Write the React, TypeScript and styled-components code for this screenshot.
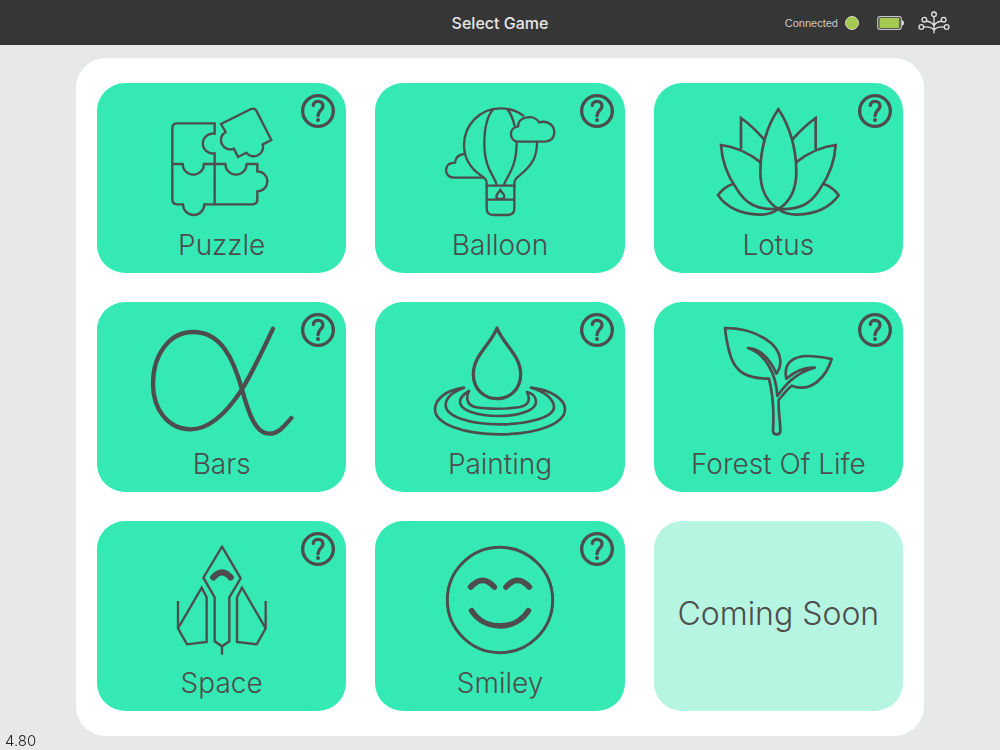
import React from "react";
import styled, { createGlobalStyle } from "styled-components";

const GlobalStyle = createGlobalStyle`
  *, *::before, *::after { box-sizing: border-box; }
  body {
    margin: 0;
    background: #e7e9e8;
    color: #4d4d4d;
    font-family: Inter, "Liberation Sans", sans-serif;
  }
  button { font: inherit; color: inherit; border: 0; padding: 0; cursor: pointer; }
`;

const Page = styled.div`
  min-height: 100vh;
  display: flex;
  flex-direction: column;
`;

const Header = styled.header`
  height: 45px;
  display: grid;
  grid-template-columns: 1fr auto 1fr;
  align-items: center;
  padding: 0 50px;
  background: #363636;
  color: #e6e6e6;
`;

const Title = styled.h1`
  grid-column: 2;
  margin: 0;
  font-size: 16px;
  line-height: 20px;
  font-weight: 500;
`;

const StatusBar = styled.div`
  display: flex;
  align-items: center;
  justify-content: flex-end;
`;

const StatusText = styled.span`
  font-family: "Liberation Sans", Arial, sans-serif;
  font-size: 11px;
  line-height: 16px;
  color: #c8c8c8;
`;

const StatusDot = styled.span`
  width: 14px;
  height: 14px;
  margin: 0 18px 0 7px;
  border: 1px solid #d3dcc0;
  border-radius: 50%;
  background: #a5c94f;
`;

const StatusIcon = styled.svg<{ $gap?: number }>`
  display: block;
  margin-right: ${(p) => p.$gap ?? 0}px;
`;

const Main = styled.main`
  padding: 13px 76px 14px;
`;

const Panel = styled.div`
  display: grid;
  grid-template-columns: repeat(3, 1fr);
  gap: 29px;
  padding: 25px 21px;
  border-radius: 30px;
  background: #fff;
`;

const Tile = styled.article`
  position: relative;
  display: flex;
`;

const GameButton = styled.button`
  flex: 1;
  height: 190px;
  display: flex;
  flex-direction: column;
  align-items: center;
  padding-top: 24px;
  border-radius: 28px;
  background: #35e9b4;
`;

const Art = styled.svg`
  width: 150px;
  height: 110px;
  fill: none;
  stroke: #4d4d4d;
  stroke-width: 7;
`;

const GameName = styled.span`
  margin-top: 10px;
  font-size: 28px;
  line-height: 36px;
  font-weight: 300;
`;

const HelpButton = styled.button`
  position: absolute;
  top: 11px;
  right: 11px;
  width: 34px;
  height: 34px;
  border-radius: 50%;
  background: transparent;
`;

const HelpMark = styled.svg`
  display: block;
  fill: none;
  stroke: #4d4d4d;
  stroke-linecap: round;
`;

const SoonTile = styled.article`
  height: 190px;
  display: flex;
  align-items: center;
  justify-content: center;
  padding-bottom: 4px;
  border-radius: 28px;
  background: #b5f5e1;
  font-size: 32px;
  line-height: 40px;
  font-weight: 300;
`;

const Version = styled.small`
  position: fixed;
  left: 5px;
  bottom: 0;
  font-size: 15px;
  line-height: 18px;
  font-weight: 300;
  color: #222;
`;

type Game = { name: string; viewBox: string; art: React.ReactNode };

const games: Game[] = [
  {
    name: "Puzzle",
    viewBox: "-10 51 450 330",
    art: (
      <>
        <path d="M193 343V190A30 30 0 1 1 193 131V100H80Q66 100 66 114V328Q66 343 80 343H98A32 32 0 0 0 162 343H306Q321 343 321 328V304A30 30 0 0 0 321 244V222H289A31 31 0 0 1 225 222H161A31 31 0 0 1 97 222H66" />
        <path d="M212 102L302 57Q312 53 318 62L363 150L337 163A28 28 0 0 1 288 188L263 201L251 176A28 28 0 0 1 226 126Z" />
      </>
    ),
  },
  {
    name: "Balloon",
    viewBox: "-15 51 450 330",
    art: (
      <>
        <path d="M170 290V278Q170 267 152 256C118 232 102 200 102 165C102 105 150 55 211 55C240 55 264 64 282 79M321 155C321 200 308 225 268 257Q253 268 253 280V290" />
        <path d="M190 57C170 80 163 115 163 160C163 215 178 240 192 265Q200 278 200 288M231 57C243 70 250 90 254 108M260 155C260 210 247 238 231 265Q222 280 222 288" />
        <path d="M262 155C236 150 236 112 264 109C264 78 315 72 327 97C355 90 373 108 373 126C373 145 360 155 345 155ZM102 192Q78 194 75 218C55 218 48 230 48 241C48 255 60 263 72 263H162" />
        <path d="M170 287H253V355Q253 375 233 375H190Q170 375 170 355ZM170 329H253M211 300C204 310 199 313 199 319C199 330 223 330 223 319C223 312 215 308 211 300Z" />
      </>
    ),
  },
  {
    name: "Lotus",
    viewBox: "10 51 450 330",
    art: (
      <g strokeWidth="8">
        <path d="M236 58C200 110 182 180 182 245C182 300 200 335 236 357C272 335 290 300 290 245C290 180 272 110 236 58Z" />
        <path d="M195 150Q160 110 124 84V178M277 150Q312 110 348 84V178" />
        <path d="M183 217Q125 172 64 165Q68 235 110 295C140 345 175 360 236 357M289 217Q347 172 408 165Q404 235 362 295C332 345 297 360 236 357" />
        <path d="M102 281Q72 290 55 316Q95 372 180 374Q215 374 236 357M370 281Q400 290 417 316Q377 372 292 374Q257 374 236 357" />
      </g>
    ),
  },
  {
    name: "Bars",
    viewBox: "20 48 450 330",
    art: (
      <path
        strokeWidth="13"
        strokeLinecap="round"
        d="M398 56C370 115 340 180 305 238C255 315 205 358 150 358C85 358 38 300 38 222C38 130 90 66 158 66C245 66 280 150 305 238C325 310 345 371 387 371C415 371 430 350 453 324"
      />
    ),
  },
  {
    name: "Painting",
    viewBox: "15 48 450 330",
    art: (
      <g strokeWidth="8" strokeLinejoin="round">
        <path
          strokeWidth="10"
          d="M231 54C215 100 160 135 160 193C160 240 195 266 231 266C267 266 302 240 302 193C302 135 247 100 231 54Z"
        />
        <path d="M132 233C78 240 45 268 45 298C45 342 130 373 240 373C350 373 435 342 435 298C435 265 390 240 333 233C375 245 402 268 402 292C402 320 330 343 240 343C150 343 77 320 77 285C77 265 95 247 132 233Z" />
        <path d="M147 243C130 253 120 263 120 276C120 300 170 318 236 318C300 318 348 300 348 276C348 262 338 250 321 246C330 265 330 285 300 291C260 298 200 298 165 291C140 284 137 262 147 243Z" />
      </g>
    ),
  },
  {
    name: "Forest Of Life",
    viewBox: "70 48 450 330",
    art: (
      <path
        strokeWidth="8"
        strokeLinejoin="round"
        d="M268 206C200 206 170 185 155 145C145 115 139 85 136 54C200 54 245 75 275 100C305 128 310 165 290 191C275 155 245 115 205 114C255 130 290 190 293 258C310 235 340 190 405 173C370 170 345 185 320 206C310 160 340 138 385 138C410 138 430 142 456 147C440 200 395 250 336 227C320 240 310 255 297 270C295 300 302 330 302 362Q302 373 291 373Q280 373 280 362C282 330 284 270 268 206Z"
      />
    ),
  },
  {
    name: "Space",
    viewBox: "-40 45 450 330",
    art: (
      <>
        <path d="M185 50L241 145L207 202V334L185 349L163 334V202L129 143ZM185 349V374" />
        <path d="M53 213V295L80 343L139 336V202L124 173L53 295M316 213V295L289 343L230 336V202L245 173L316 295" />
        <path strokeWidth="19" strokeLinecap="round" d="M159 142Q185 112 211 142" />
      </>
    ),
  },
  {
    name: "Smiley",
    viewBox: "-15 45 450 330",
    art: (
      <g strokeWidth="17" strokeLinecap="round">
        <circle cx="210" cy="210" r="158" strokeWidth="9" />
        <path d="M122 171Q158 131 193 171M228 171Q262 131 298 171M125 242C164 303 256 303 295 242" />
      </g>
    ),
  },
];

function Battery() {
  return (
    <StatusIcon $gap={14} width="27" height="14" viewBox="0 0 27 14" aria-hidden="true">
      <rect x="0.7" y="0.7" width="23.6" height="12.6" rx="2" fill="none" stroke="#c4c4c4" strokeWidth="1.2" />
      <rect x="2.4" y="2" width="20" height="10" fill="#a5c94f" />
      <path d="M25 4Q27 5 27 7T25 10Z" fill="#e6e6e6" />
    </StatusIcon>
  );
}

function TreeLogo() {
  return (
    <StatusIcon width="32" height="23" viewBox="443 34 96 69" fill="none" stroke="#e0e0e0" strokeWidth="4" aria-hidden="true">
      <circle cx="491" cy="44" r="7" />
      <circle cx="462" cy="60" r="7" />
      <circle cx="520" cy="60" r="7" />
      <circle cx="453" cy="82" r="7" />
      <circle cx="529" cy="82" r="7" />
      <path d="M491 51V101M468 64Q487 67 491 79Q495 67 514 64M460 82Q484 80 491 92Q498 80 522 82" />
    </StatusIcon>
  );
}

function GameTile({ game }: { game: Game }) {
  return (
    <Tile>
      <GameButton type="button">
        <Art viewBox={game.viewBox} aria-hidden="true">
          {game.art}
        </Art>
        <GameName>{game.name}</GameName>
      </GameButton>
      <HelpButton type="button" aria-label={`Help for ${game.name}`}>
        <HelpMark width="34" height="34" viewBox="0 0 102 102" aria-hidden="true">
          <circle cx="51" cy="51" r="46" strokeWidth="10" />
          <path strokeWidth="10" d="M37 34C38 18 66 18 66 36C66 48 51 49 51 65" />
          <circle cx="51" cy="78" r="6" fill="#4d4d4d" stroke="none" />
        </HelpMark>
      </HelpButton>
    </Tile>
  );
}

export default function App() {
  return (
    <Page>
      <GlobalStyle />
      <Header>
        <Title>Select Game</Title>
        <StatusBar>
          <StatusText>Connected</StatusText>
          <StatusDot />
          <Battery />
          <TreeLogo />
        </StatusBar>
      </Header>
      <Main>
        <Panel>
          {games.map((game) => (
            <GameTile key={game.name} game={game} />
          ))}
          <SoonTile>Coming Soon</SoonTile>
        </Panel>
      </Main>
      <Version>4.80</Version>
    </Page>
  );
}
